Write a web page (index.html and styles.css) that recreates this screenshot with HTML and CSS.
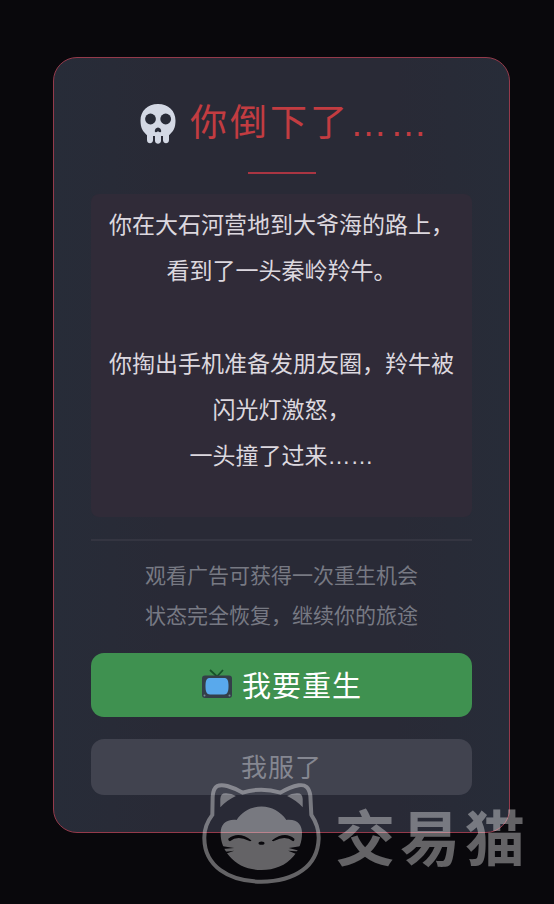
FILE: index.html
```html
<!DOCTYPE html>
<html lang="zh-CN">
<head>
<meta charset="utf-8">
<meta name="viewport" content="width=device-width, initial-scale=1">
<title>你倒下了</title>
<link rel="stylesheet" href="styles.css">
</head>
<body>
<main class="screen">
  <section class="card">
    <h1 class="title">
      <svg class="skull" viewBox="0 0 38 40" aria-hidden="true">
        <path fill="#d3d8e4" d="M19 0C8.500 0 1.500 7 1.500 16.500c0 3 .5 6.500 1.500 8.500 1.300 2.800 3.500 4.500 5 6.200V36c0 4.200 5.800 4.200 6 .3V32h2v5c.3 3.600 5.700 3.600 6 0v-5h2v4.300c.2 3.900 6 3.900 6-.3v-4.800c1.500-1.700 3.700-3.400 5-6.200 1-2 1.500-5.500 1.500-8.500C36.500 7 29.500 0 19 0z"/>
        <circle cx="11.500" cy="15" r="5.400" fill="#282b37"/>
        <circle cx="26.700" cy="15" r="5.400" fill="#282b37"/>
        <path fill="#282b37" d="M19 23.500c-2 0-3.500 2.300-3.200 4 .4 1.200 2 .6 3.200-.3 1.200.9 2.800 1.500 3.200.3.300-1.700-1.200-4-3.200-4z"/>
      </svg>
      <span>你倒下了……</span>
    </h1>
    <div class="accent"></div>
    <div class="story">
      <p>你在大石河营地到大爷海的路上，<br>看到了一头秦岭羚牛。</p>
      <p>你掏出手机准备发朋友圈，羚牛被闪光灯激怒，<br>一头撞了过来……</p>
    </div>
    <p class="hint">观看广告可获得一次重生机会<br>状态完全恢复，继续你的旅途</p>
    <button class="btn btn-primary" type="button">
      <svg class="tv" viewBox="0 0 32 30" aria-hidden="true">
        <path d="M9 1l7 6.500L22 1" fill="none" stroke="#175329" stroke-width="1.800"/>
        <rect x="1" y="6.500" width="30" height="22.500" rx="3" fill="#343f49"/>
        <path d="M9 9h14c3.500 0 4.500 2.500 4.500 8s-1 8.500-4.500 8.500H9c-3.500 0-4.500-3-4.500-8.500S5.500 9 9 9z" fill="#59a9ec"/>
        <circle cx="3.500" cy="26.500" r="1" fill="#778994"/>
        <circle cx="28.500" cy="26.500" r="1" fill="#778994"/>
      </svg>
      <span>我要重生</span>
    </button>
    <button class="btn btn-muted" type="button">我服了</button>
  </section>
  <div class="watermark">
    <svg class="cat" viewBox="36 40 356 304" aria-hidden="true">
      <mask id="face" maskUnits="userSpaceOnUse" x="36" y="40" width="356" height="304">
        <rect x="36" y="40" width="356" height="304" fill="#fff"/>
        <path d="M114 208Q145 183 184 213Q180 217 176 214Q142 196 119 215Q113 214 114 208ZM313 208Q284 183 245 213Q249 217 253 214Q286 196 309 215Q314 214 313 208Z" fill="#000"/>
        <path d="M98 230L132 236L98 239ZM98 248L132 244L98 256ZM330 230L296 236L330 245ZM330 246L294 244L330 258Z" fill="#000"/>
        <ellipse cx="214" cy="221" rx="9" ry="5" fill="#000"/>
      </mask>
      <path d="M66 136L67 82C69 45 88 43 111 49Q138 57 157 69Q213 51 271 69Q300 52 326 47Q356 42 361 78L364 136C382 163 387 183 386 208C383 290 315 337 213 337C113 337 43 288 42 208C41 181 49 158 66 136Z" fill="none" stroke="#fff" stroke-width="12" stroke-linejoin="round"/>
      <path fill="#fff" d="M90 113V88Q91 69 108 71Q124 72 137 79Q109 92 90 113ZM338 113V88Q337 69 320 71Q304 72 291 79Q319 92 338 113Z"/>
      <path fill="#fff" mask="url(#face)" d="M139 151C158 125 184 111 214 111C245 111 270 126 289 151C324 148 336 167 336 191C336 217 328 239 311 260C287 289 253 302 214 302C174 302 140 288 117 260C100 239 91 217 91 191C91 164 108 148 139 151Z"/>
    </svg>
    <span>交易猫</span>
  </div>
</main>
</body>
</html>
```
FILE: styles.css
```css
* {
  box-sizing: border-box;
}

body {
  margin: 0;
  background: #09080c;
  font-family: "Liberation Sans", "Noto Sans CJK SC", sans-serif;
}

h1,
p {
  margin: 0;
  font-weight: 400;
}

.screen {
  position: relative;
  min-height: 100vh;
  padding: 57px 44px 71px 53px;
}

.card {
  padding: 36px 37px 37px;
  border: 1px solid #943a4b;
  border-radius: 24px;
  background: linear-gradient(90deg, #272c38, #292a36 25%, #292a36 75%, #272c38);
  text-align: center;
}

.title {
  display: flex;
  align-items: center;
  justify-content: center;
  gap: 13px;
  padding-left: 6px;
  color: #c23c41;
  font-size: 37px;
  line-height: 60px;
  letter-spacing: 3px;
}

.skull {
  width: 38px;
  height: 40px;
}

.accent {
  width: 68px;
  height: 2px;
  margin: 18px auto 20px;
  background: #a93542;
}

.story {
  padding: 8px 16px 38px;
  border-radius: 8px;
  background: #302b38;
  color: #dcd8df;
  font-size: 23px;
  line-height: 46px;
}

.story p + p {
  margin-top: 47px;
}

.hint {
  margin: 22px 0 17px;
  padding-top: 15px;
  border-top: 2px solid #343541;
  color: #777983;
  font-size: 21px;
  line-height: 40px;
}

.btn {
  display: flex;
  align-items: center;
  justify-content: center;
  width: 100%;
  padding: 0 0 3px;
  border: 0;
  border-radius: 13px;
  font-family: inherit;
}

.btn-primary {
  gap: 9px;
  height: 64px;
  background: #3f9150;
  color: #fff;
  font-size: 29px;
  letter-spacing: 1px;
}

.btn-muted {
  height: 56px;
  margin-top: 22px;
  background: #41434f;
  color: #858791;
  font-size: 26px;
  letter-spacing: 1px;
}

.tv {
  width: 32px;
  height: 30px;
}

.watermark {
  position: absolute;
  right: 24px;
  bottom: 20px;
  display: flex;
  align-items: flex-end;
  gap: 14px;
  color: #fff;
  font-size: 60px;
  font-weight: 700;
  line-height: 86px;
  letter-spacing: 5px;
  opacity: 0.37;
  pointer-events: none;
}

.cat {
  width: 119px;
  height: 101px;
}
```
